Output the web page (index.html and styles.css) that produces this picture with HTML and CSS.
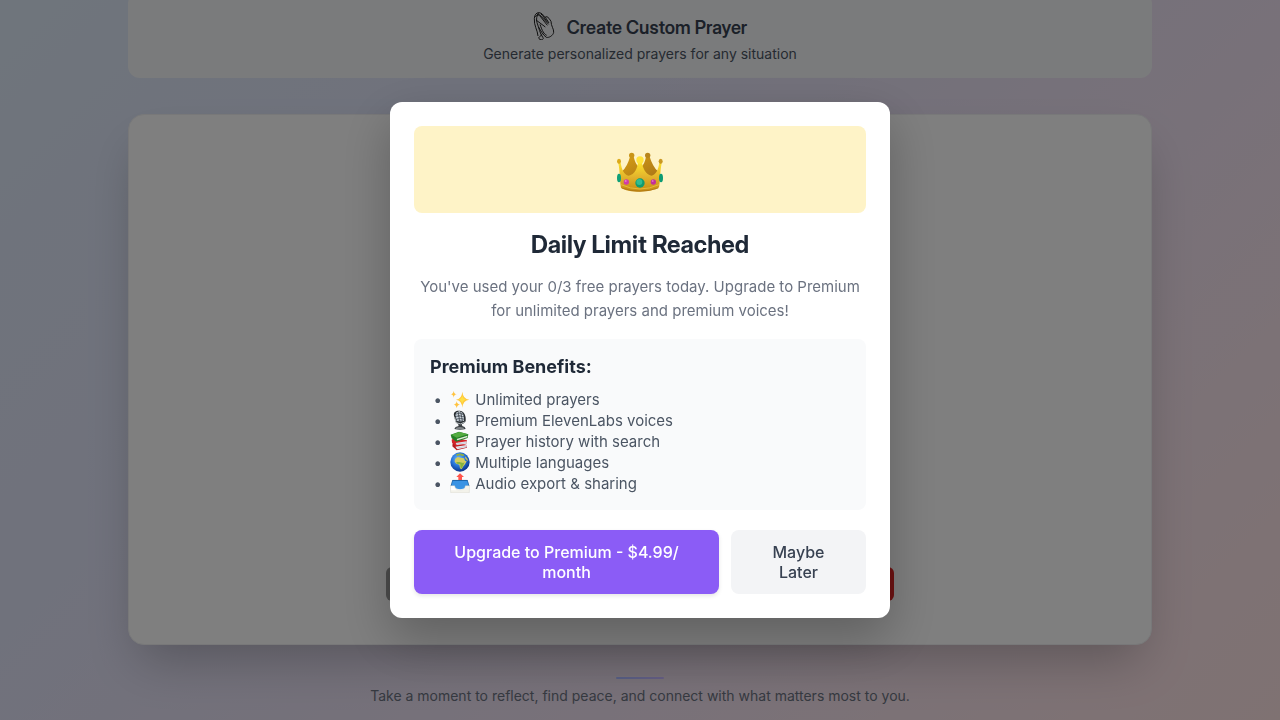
FILE: index.html
```html
<!DOCTYPE html>
<html lang="en">
<head>
<meta charset="utf-8">
<meta name="viewport" content="width=device-width, initial-scale=1">
<title>Daily Limit Reached</title>
<link rel="stylesheet" href="styles.css">
</head>
<body>
<main class="page">
  <section class="feature">
    <h2 class="feature-title">
      <svg class="hands" viewBox="36 20 66 84" aria-hidden="true">
        <path d="M51 92C50 75 38 60 40 39C41 28 46 22 53 22C60 22 67 27 71 36L78 34L84 39L90 48C90 62 99 71 98 81C96 91 84 98 76 96C65 88 60 77 52 64M53 22C47 32 45 41 48 52C54 67 56 84 66 97C70 103 58 106 54 100C50 94 61 94 62 87M43 35C46 28 53 28 57 32L79 60M48 29C54 24 61 32 65 38L83 57M59 25C68 32 72 43 80 51M73 36L84 53M45 44L73 65M57 57C64 78 69 86 77 90"/>
      </svg>
      <span>Create Custom Prayer</span>
    </h2>
    <p class="feature-text">Generate personalized prayers for any situation</p>
  </section>
  <section class="panel">
    <div class="panel-actions">
      <div class="action action-dark"></div>
      <div class="action action-red"></div>
    </div>
  </section>
  <footer class="footer">
    <div class="rule"></div>
    <p class="footer-text">Take a moment to reflect, find peace, and connect with what matters most to you.</p>
  </footer>
</main>

<div class="overlay">
  <div class="modal" role="dialog" aria-modal="true" aria-labelledby="limit-title">
    <div class="banner">
      <svg class="crown" viewBox="48 34 144 120" aria-hidden="true">
        <defs>
          <linearGradient id="gold" x1="0" y1="0" x2="0" y2="1"><stop offset="0" stop-color="#ffe52d"/><stop offset=".5" stop-color="#e3b42c"/><stop offset="1" stop-color="#c58b12"/></linearGradient>
          <linearGradient id="bronze" x1="0" y1="0" x2="1" y2="1"><stop offset="0" stop-color="#d79d14"/><stop offset="1" stop-color="#a97618"/></linearGradient>
        </defs>
        <path fill="url(#bronze)" d="M66 92Q82 78 90 48h11Q106 70 116 78L104 108H74zM174 92Q158 78 149 48h-11Q134 70 124 78L136 108h30z"/>
        <circle cx="95" cy="44" r="8" fill="#c99518"/><circle cx="143" cy="44" r="8" fill="#b8851c"/>
        <path fill="url(#gold)" d="M55 68L62 67C65 86 72 103 86 105C104 101 113 82 114 63H126C127 82 138 101 154 105C168 103 175 86 178 67L185 68C180 90 181 121 177 140C156 157 84 157 63 141C59 122 60 91 55 68z"/>
        <circle cx="120" cy="58" r="11" fill="#ffe33c"/>
        <ellipse cx="57" cy="62" rx="6" ry="8" fill="#dba91b"/><ellipse cx="182" cy="62" rx="6" ry="8" fill="#c99722"/>
        <path fill="none" stroke="#f0cb48" stroke-width="2" d="M63 132Q120 158 177 132"/>
        <path fill="none" stroke="#a87112" stroke-width="2" d="M65 142Q120 161 175 142"/>
        <ellipse cx="57" cy="112" rx="6" ry="13" fill="#10a078"/><ellipse cx="183" cy="112" rx="6" ry="13" fill="#0d9b73"/>
        <circle cx="120" cy="127" r="14" fill="#119b70"/><circle cx="118" cy="124" r="9" fill="#31bd91"/>
        <circle cx="79" cy="124" r="8" fill="#cf3da7"/><circle cx="160" cy="124" r="8" fill="#c3309b"/>
        <circle cx="77" cy="121" r="3" fill="#ec77cc"/><circle cx="158" cy="121" r="3" fill="#e36cc1"/>
      </svg>
    </div>
    <h1 class="title" id="limit-title">Daily Limit Reached</h1>
    <p class="message">You've used your 0/3 free prayers today. Upgrade to Premium for unlimited prayers and premium voices!</p>
    <section class="benefits">
      <h3 class="benefits-title">Premium Benefits:</h3>
      <ul class="benefits-list">
        <li><svg class="emoji" viewBox="60 12 60 60" aria-hidden="true"><path fill="#ffc83d" d="M97 20Q99 42 118 44Q99 46 97 68Q95 46 78 44Q95 42 97 20z"/><path fill="#ffdf45" d="M97 32Q99 42 107 44Q98 46 97 56Q95 46 87 44Q95 42 97 32z"/><path fill="#ffc340" d="M71 17Q72 27 80 28Q72 29 71 38Q70 29 62 28Q70 27 71 17zM80 48Q81 58 90 59Q81 60 80 70Q79 60 71 59Q79 58 80 48z"/></svg> Unlimited prayers</li>
        <li><svg class="emoji" viewBox="60 75 60 60" aria-hidden="true"><path fill="#3b4044" d="M73 132L77 126L86 123L84 116H95L97 123L104 126L107 132Q90 137 73 132z"/><path fill="#999d9f" d="M77 129Q90 124 102 129L101 131H79z"/><path fill="#292e32" d="M72 92C69 78 83 75 93 78C103 81 109 93 107 108C105 119 82 121 77 110z"/><path fill="#75808b" d="M76 88Q86 72 100 87L102 106Q94 113 81 108z"/><path fill="none" stroke="#e2e9ef" stroke-width="3" d="M79 84Q87 76 97 84M77 91Q87 85 100 92M78 99Q89 94 102 99M80 106Q91 102 102 106"/><path fill="none" stroke="#252b30" stroke-width="2" d="M84 79L89 109M92 79L97 108"/><path fill="none" stroke="#b4babd" stroke-width="3" d="M74 96L78 113Q92 121 105 111"/></svg> Premium ElevenLabs voices</li>
        <li><svg class="emoji" viewBox="60 3 60 60" aria-hidden="true"><path fill="#b51b20" d="M68 40L73 36L110 46L111 53L80 61L67 49z"/><path fill="#ececf2" d="M76 50L110 45V52L82 58z"/><path fill="#d42429" d="M65 29L72 23L111 31L109 43L78 48L66 38z"/><path fill="#e5e8ef" d="M77 39L110 34V41L80 45z"/><path fill="none" stroke="#8d8fa7" d="M79 42L109 38M82 54L110 49"/><path fill="#247f25" d="M62 14L87 5L115 13L113 24L79 35L65 25z"/><path fill="#53ac40" d="M64 14L88 6L114 13L80 23z"/><path fill="#e1ead9" d="M80 27L112 17V22L82 31z"/></svg> Prayer history with search</li>
        <li><svg class="emoji" viewBox="60 66 60 60" aria-hidden="true"><defs><radialGradient id="sea" cx=".42" cy=".35" r=".65"><stop offset="0" stop-color="#72bcff"/><stop offset=".55" stop-color="#2673d8"/><stop offset="1" stop-color="#0b348b"/></radialGradient></defs><circle cx="90" cy="96" r="29" fill="url(#sea)"/><path fill="#8fae45" d="M78 73Q90 68 101 73L104 77L96 78L90 75L82 79z"/><path fill="#d3cc62" d="M75 87L83 81L92 83L102 85L105 92L110 94L105 103L99 110L95 118L90 115L88 104L79 101L74 95z"/><path fill="#86b340" d="M79 96L88 96L99 99L104 97L99 108L94 116L91 112V103L80 101z"/><path fill="#c9c052" d="M106 79L112 86L115 93L110 91L105 84z"/></svg> Multiple languages</li>
        <li><svg class="emoji" viewBox="60 129 60 60" aria-hidden="true"><path fill="#c9d0d5" d="M68 149H112L119 168H61z"/><path fill="#1d65aa" d="M67 150H113L118 168H62z"/><path fill="#3993e4" d="M68 153H112L116 171Q90 184 64 171z"/><path fill="#f3f2ea" stroke="#cacac2" d="M61 167H74Q77 178 84 179H97Q104 178 106 167H119L118 188H62z"/><path fill="#fff" d="M63 169H72L75 176L80 181H63z"/><path fill="#ff554d" d="M90 130L102 141H96V150H85V141H79z"/></svg> Audio export &amp; sharing</li>
      </ul>
    </section>
    <div class="buttons">
      <button class="button primary" type="button">Upgrade to Premium - $4.99/<wbr>month</button>
      <button class="button secondary" type="button">Maybe Later</button>
    </div>
  </div>
</div>
</body>
</html>
```
FILE: styles.css
```css
* { box-sizing: border-box; }

body {
  margin: 0;
  min-height: 100vh;
  overflow: hidden;
  font-family: Inter, "Liberation Sans", sans-serif;
  background: linear-gradient(135deg, #deebf8 0%, #dfe7f9 12%, #e1e4f9 32%, #e9e2f5 50%, #f1e3f3 66%, #f8e4ed 80%, #fde4e8 92%, #fee5e5 100%);
}

h1, h2, h3, p, ul { margin: 0; }

.page {
  max-width: 1024px;
  margin: 0 auto;
}

.feature {
  margin-top: -8px;
  padding: 20px 16px 14px;
  border-radius: 12px;
  background: #f5f7f9;
  text-align: center;
}

.feature-title {
  display: flex;
  align-items: center;
  justify-content: center;
  gap: 12px;
  height: 32px;
  color: #374151;
  font-family: "Inter Display", Inter, sans-serif;
  font-size: 18px;
  font-weight: 600;
  line-height: 22px;
}

.hands {
  width: 22px;
  height: 28px;
  margin-bottom: 4px;
  fill: none;
  stroke: #222;
  stroke-width: 3;
}

.feature-text {
  color: #4b5563;
  font-size: 14px;
  line-height: 20px;
}

.panel {
  display: flex;
  align-items: flex-end;
  justify-content: center;
  min-height: 531px;
  margin-top: 36px;
  padding: 43px;
  border: 1px solid #f0f1f3;
  border-radius: 16px;
  background: #fff;
  box-shadow: 0 25px 50px -12px rgba(0, 0, 0, 0.25);
}

.panel-actions {
  display: flex;
  justify-content: space-between;
  width: 508px;
}

.action {
  width: 120px;
  height: 34px;
  border-radius: 6px;
}

.action-dark { background: #999; }
.action-red { background: #dc2626; }

.footer {
  padding-top: 32px;
  text-align: center;
}

.rule {
  width: 48px;
  height: 2px;
  margin: 0 auto 7px;
  border-radius: 1px;
  background: linear-gradient(90deg, #a5b4fc, #c4b5fd);
}

.footer-text {
  color: #6b7280;
  font-size: 14px;
  line-height: 20px;
}

.overlay {
  position: fixed;
  inset: 0;
  display: flex;
  align-items: center;
  justify-content: center;
  padding: 16px;
  background: rgba(0, 0, 0, 0.5);
}

.modal {
  width: 100%;
  max-width: 500px;
  padding: 24px;
  border-radius: 12px;
  background: #fff;
  box-shadow: 0 20px 50px rgba(0, 0, 0, 0.25);
}

.banner {
  display: flex;
  justify-content: center;
  padding: 26px 16px 21px;
  border-radius: 8px;
  background: #fef3c7;
}

.crown {
  width: 48px;
  height: 40px;
}

.title {
  padding: 16px 0 14px;
  color: #1f2937;
  font-family: "Inter Display", Inter, sans-serif;
  font-size: 24px;
  font-weight: 700;
  line-height: 32px;
  text-align: center;
}

.message {
  color: #6b7280;
  font-size: 15px;
  line-height: 24px;
  text-align: center;
}

.benefits {
  margin: 16px 0 20px;
  padding: 16px;
  border-radius: 8px;
  background: #f9fafb;
}

.benefits-title {
  margin-bottom: 10px;
  color: #1f2937;
  font-size: 18px;
  font-weight: 700;
  line-height: 24px;
}

.benefits-list {
  padding-left: 20px;
  color: #4b5563;
  font-size: 15px;
  line-height: 21px;
  list-style-type: "•  ";
}

.emoji {
  width: 20px;
  height: 20px;
  margin-right: 1px;
  vertical-align: top;
}

.buttons {
  display: flex;
  gap: 12px;
}

.button {
  padding: 12px 24px;
  border: 0;
  border-radius: 8px;
  font: 500 16px/20px Inter, "Liberation Sans", sans-serif;
  cursor: pointer;
}

.primary {
  flex: 1;
  color: #fff;
  background: #8b5cf6;
  box-shadow: 0 2px 4px rgba(0, 0, 0, 0.1);
}

.secondary {
  width: 135px;
  color: #374151;
  background: #f3f4f6;
}
```
